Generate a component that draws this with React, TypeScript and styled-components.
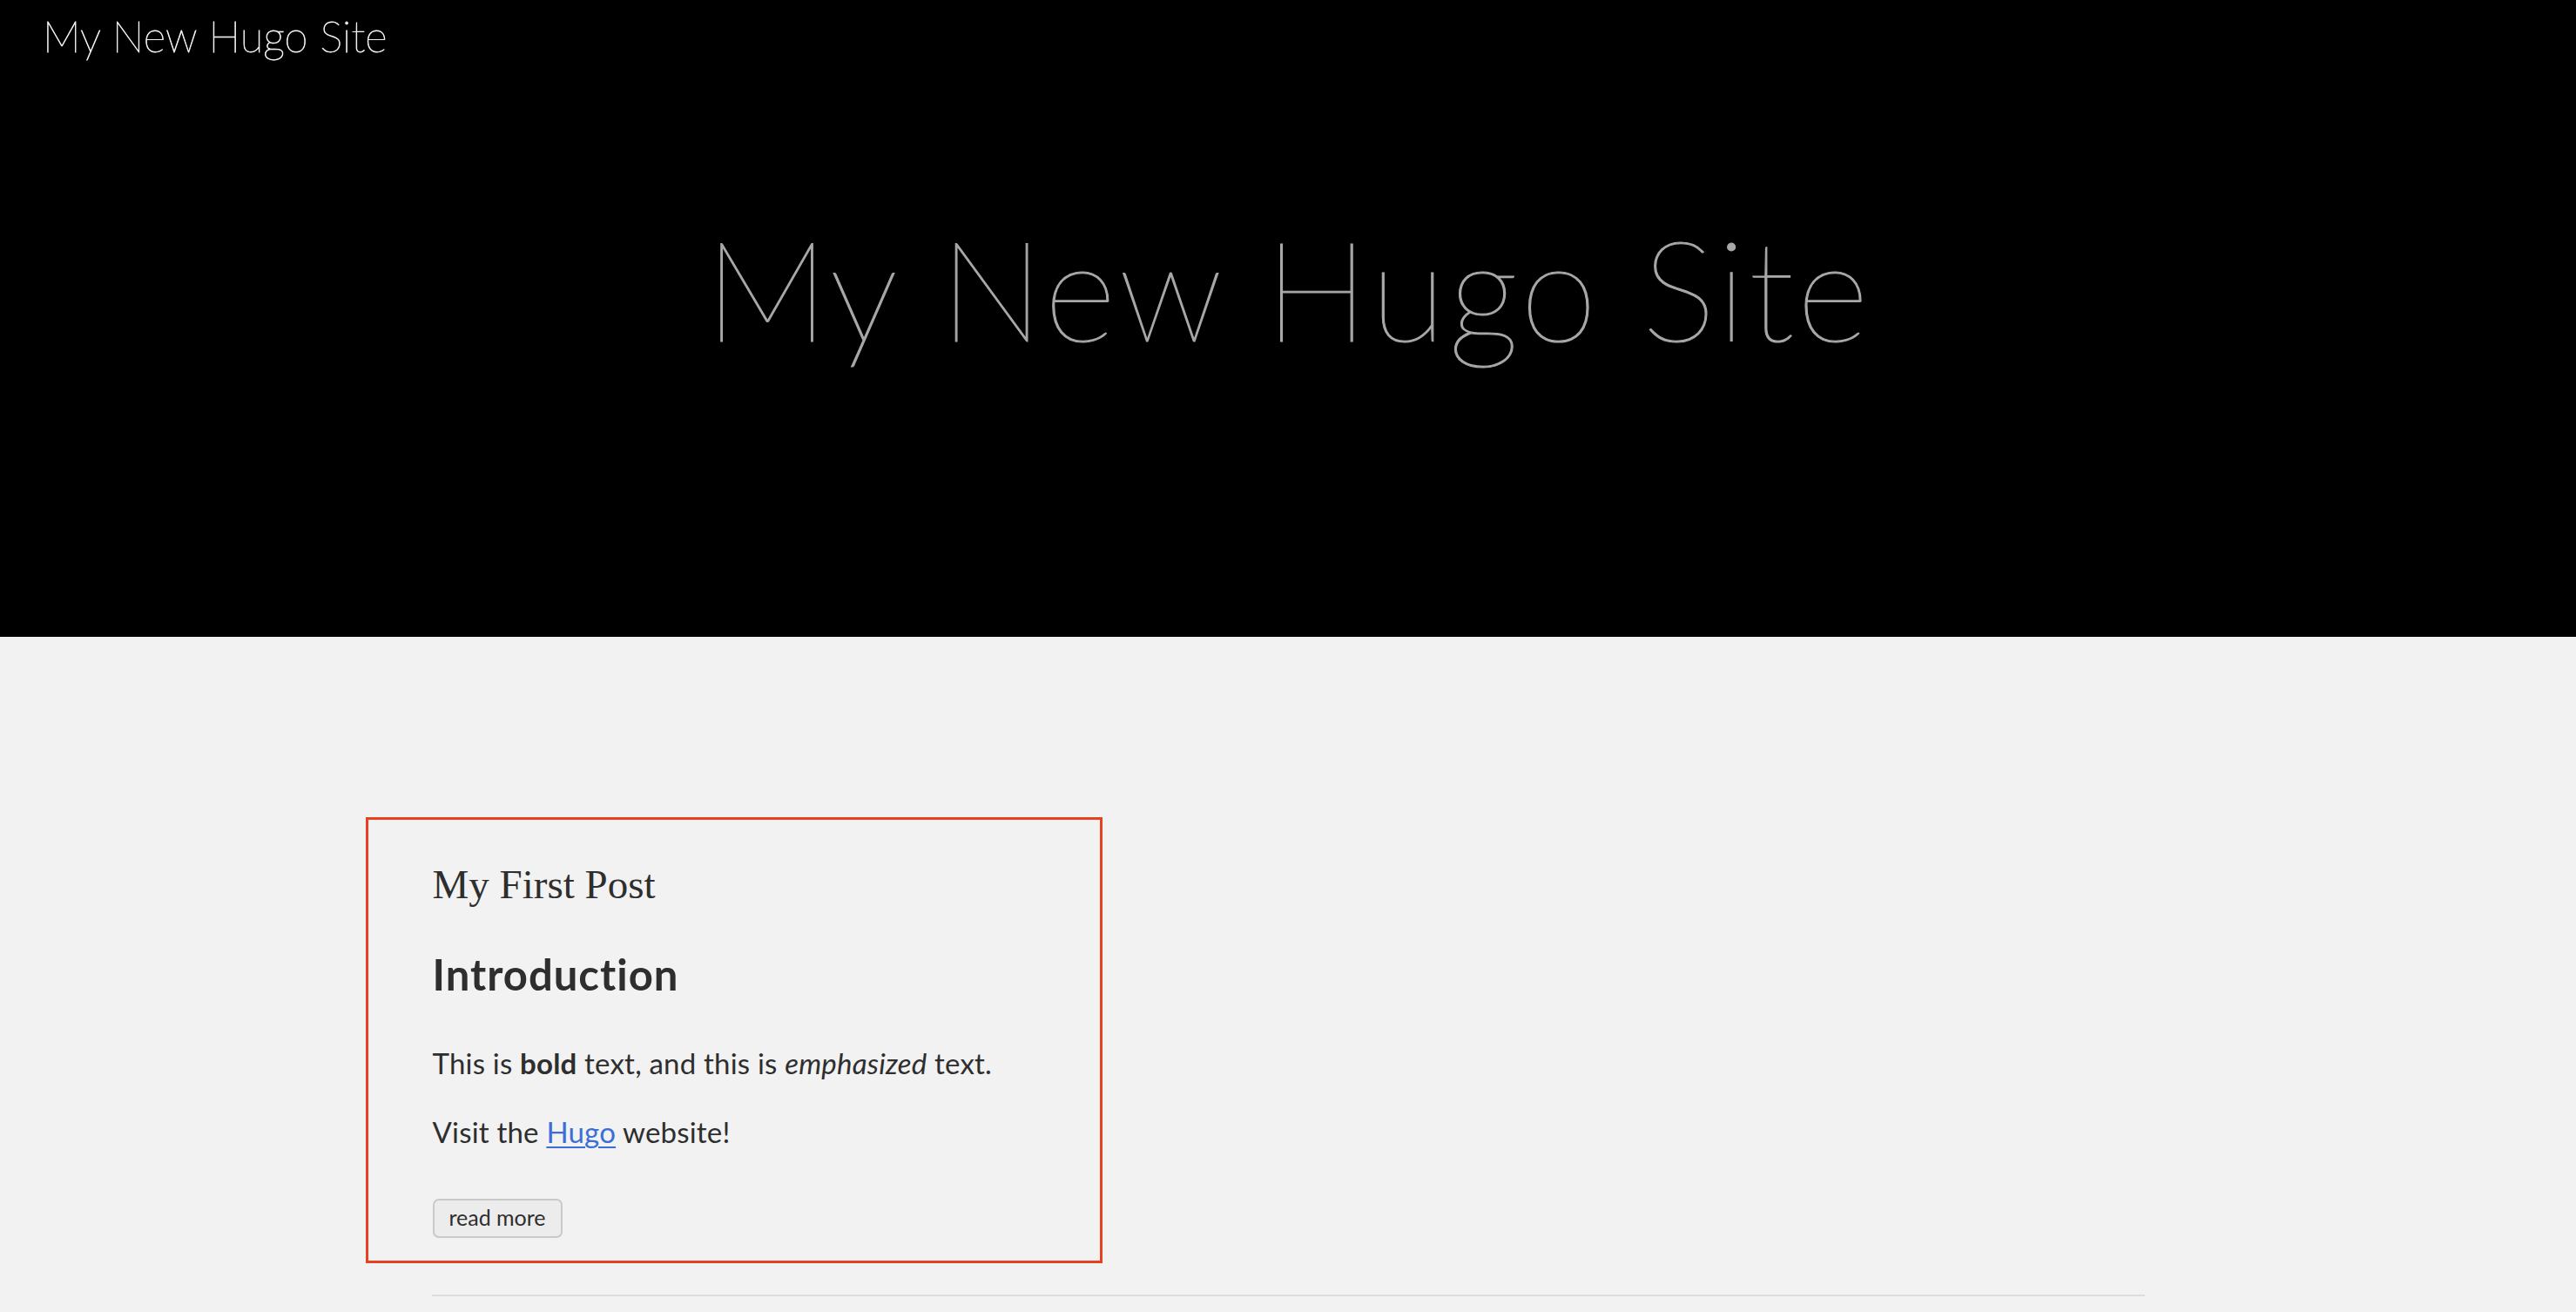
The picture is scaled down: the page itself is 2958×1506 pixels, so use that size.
import React from "react";
import styled, { createGlobalStyle } from "styled-components";

const GlobalStyle = createGlobalStyle`
  html, body {
    margin: 0;
    padding: 0;
    background: #f2f2f2;
  }
  body {
    font-family: "Lato", "Noto Sans", sans-serif;
    color: #2e2e2e;
  }
`;

const Page = styled.div`
  min-height: 1506px;
  background: #f2f2f2;
  overflow: hidden;
`;

const Header = styled.header`
  height: 731px;
  background: #000;
  display: flex;
  flex-direction: column;
`;

const SiteTitle = styled.a`
  display: block;
  padding: 17px 0 0 49px;
  font-family: "Lato", sans-serif;
  font-weight: 100;
  font-size: 49px;
  line-height: 1;
  color: #f0f0f0;
  -webkit-text-stroke: 0.8px #f0f0f0;
  text-decoration: none;
`;

const Hero = styled.h1`
  margin: 184px 0 0;
  text-align: center;
  font-family: "Lato", sans-serif;
  font-weight: 100;
  font-size: 160px;
  letter-spacing: 3px;
  line-height: 1;
  color: #a8a8a8;
  -webkit-text-stroke: 1.2px #a8a8a8;
`;

const Main = styled.main`
  width: 1967px;
  margin: 0 auto;
  padding-top: 207px;
`;

const Card = styled.article`
  box-sizing: border-box;
  width: 846px;
  margin-left: -76px;
  border: 3px solid #e8411f;
  padding: 51px 74px 26px;
  display: flex;
  flex-direction: column;
  align-items: flex-start;
`;

const PostTitle = styled.h2`
  margin: 0;
  font-family: "Liberation Serif", serif;
  font-weight: 400;
  font-size: 47px;
  line-height: 1;
  color: #2e2e2e;
`;

const SectionHeading = styled.h3`
  margin: 55px 0 0;
  font-family: "Lato", sans-serif;
  font-weight: 700;
  font-size: 49px;
  letter-spacing: 1px;
  line-height: 1;
  color: #2e2e2e;
`;

const Para = styled.p<{ $gap: number }>`
  margin: ${(p) => p.$gap}px 0 0;
  font-family: "Lato", sans-serif;
  font-weight: 400;
  font-size: 33px;
  letter-spacing: 0.2px;
  line-height: 1;
  color: #2e2e2e;
`;

const Link = styled.a`
  color: #3c6fd6;
  text-decoration: underline;
  text-underline-offset: 4px;
  text-decoration-thickness: 2px;
`;

const ReadMore = styled.button`
  margin-top: 60px;
  box-sizing: border-box;
  width: 149px;
  height: 45px;
  padding: 0 0 2px;
  border: 2px solid #c9c9c9;
  border-radius: 7px;
  background: #ececec;
  font-family: "Lato", sans-serif;
  font-size: 25px;
  line-height: 1;
  color: #2e2e2e;
`;

const Rule = styled.hr`
  margin: 36px 0 0;
  border: 0;
  height: 2px;
  background: #dcdcdc;
`;

export default function App() {
  return (
    <Page>
      <GlobalStyle />
      <Header>
        <SiteTitle href="#">My New Hugo Site</SiteTitle>
        <Hero>My New Hugo Site</Hero>
      </Header>
      <Main>
        <Card>
          <PostTitle>My First Post</PostTitle>
          <SectionHeading>Introduction</SectionHeading>
          <Para $gap={61}>
            This is <b>bold</b> text, and this is <em>emphasized</em> text.
          </Para>
          <Para $gap={46}>
            Visit the <Link href="#">Hugo</Link> website!
          </Para>
          <ReadMore>read more</ReadMore>
        </Card>
        <Rule />
      </Main>
    </Page>
  );
}
